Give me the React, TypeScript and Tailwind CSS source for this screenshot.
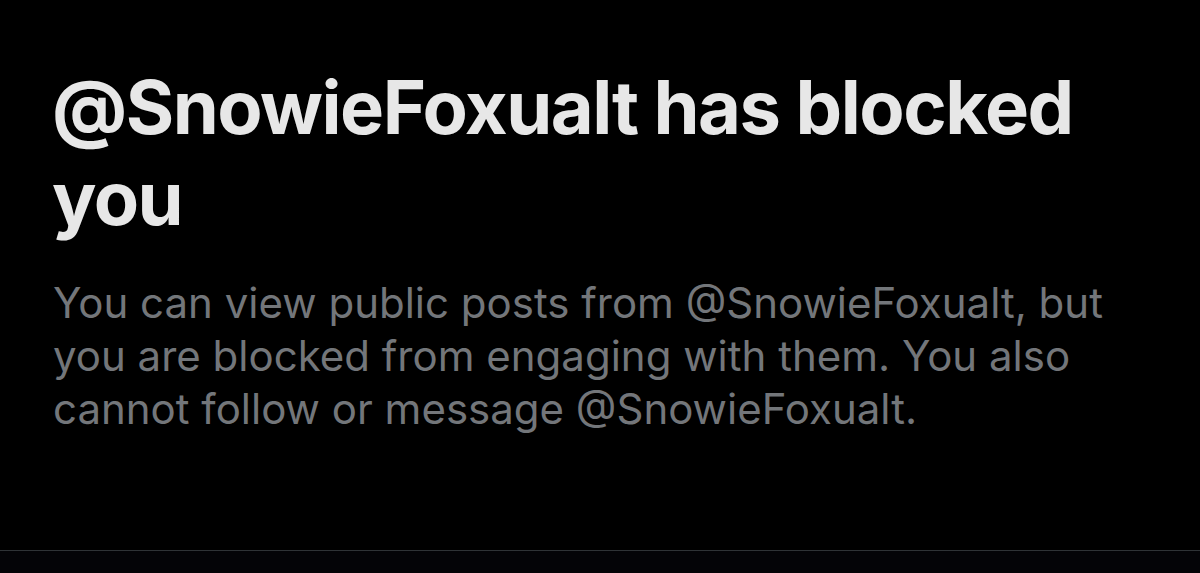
const App = () => {
  return (
    <div className="flex h-[573px] w-full flex-col bg-black font-['Inter','Liberation_Sans',sans-serif]">
      <div className="flex-1 pl-[52px] pr-[40px] pt-[62px]">
        <h1 className="text-[74px] leading-[91px] font-bold tracking-[-1.5px] text-[#e7e7e7]">
          @SnowieFoxualt has blocked you
        </h1>
        <p className="mt-[32px] pl-[1px] text-[42px] leading-[53px] text-[#73767a]">
          You can view public posts from @SnowieFoxualt, but you are blocked
          from engaging with them. You also cannot follow or message
          @SnowieFoxualt.
        </p>
      </div>
      <div className="h-[23px] border-t border-[#2f3336] bg-[#040407]" />
    </div>
  );
};

export default App;
